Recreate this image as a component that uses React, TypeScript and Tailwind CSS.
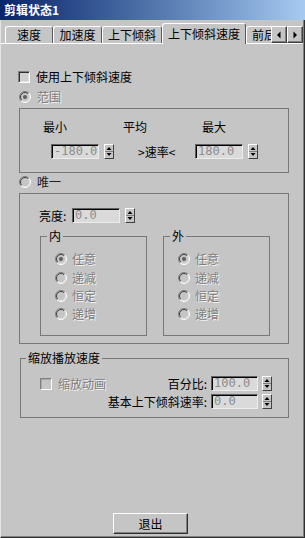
import React from "react";

const cjk = "font-['Noto_Sans_CJK_SC','Noto_Sans',sans-serif]";
const dim = "text-[#808080] [text-shadow:1px_1px_0_#f4f4f4]";

const Radio = ({ on = false }: { on?: boolean }) => (
  <svg width="12" height="12" viewBox="0 0 12 12" className="shrink-0">
    <circle cx="6" cy="6" r="5" fill="#c5c5c5" />
    <path d="M2.1 9.9A5.5 5.5 0 0 1 9.9 2.1" fill="none" stroke="#808080" />
    <path d="M9.9 2.1A5.5 5.5 0 0 1 2.1 9.9" fill="none" stroke="#ffffff" />
    <path d="M2.8 9.2A4.5 4.5 0 0 1 9.2 2.8" fill="none" stroke="#404040" />
    <path d="M9.2 2.8A4.5 4.5 0 0 1 2.8 9.2" fill="none" stroke="#dfdfdf" />
    {on && <circle cx="6" cy="6" r="2" fill="#5e5e5e" />}
  </svg>
);

const Check = ({ off = false }: { off?: boolean }) => (
  <span
    className={`block w-[12px] h-[12px] shrink-0 border border-t-[#808080] border-l-[#808080] border-r-white border-b-white ${
      off
        ? "bg-[#c5c5c5] shadow-[inset_1px_1px_0_#a8a8a8]"
        : "bg-[#d0d0d0] shadow-[inset_1px_1px_0_#303030,inset_-1px_-1px_0_#dfdfdf]"
    }`}
  />
);

const SpinBtn = ({ gap = "ml-[5px]" }: { gap?: string }) => (
  <div
    className={`${gap} w-[10px] h-[15px] shrink-0 border border-t-white border-l-white border-r-[#404040] border-b-[#404040] bg-[#c5c5c5] flex`}
  >
    <svg width="8" height="13" viewBox="0 0 8 13">
      <path d="M4 2L6.5 5H1.5Z" fill="#000" />
      <line x1="0" y1="6.5" x2="8" y2="6.5" stroke="#808080" />
      <path d="M1.5 8H6.5L4 11Z" fill="#000" />
    </svg>
  </div>
);

const Spinner = ({ v, small = false }: { v: string; small?: boolean }) => (
  <div className="flex items-center">
    <div
      className={`${small ? "w-[47px]" : "w-[48px]"} h-[15px] border border-t-[#606060] border-l-[#606060] border-b-[#ececec] border-r-[#ececec] shadow-[inset_1px_1px_0_#000] bg-[#dadada] pl-[2px] text-[12px] leading-[13px] text-[#8c8c8c] font-['DejaVu_Sans_Mono',monospace]`}
    >
      {v}
    </div>
    <SpinBtn gap={small ? "ml-[4px]" : "ml-[5px]"} />
  </div>
);

const Tab = ({ label, w, active = false }: { label: string; w: string; active?: boolean }) =>
  active ? (
    <div
      className={`${w} h-[21px] shrink-0 -mx-[0px] border-l border-t border-r border-l-white border-t-white border-r-[#5a5a5a] rounded-t-[3px] flex items-center justify-center pb-[1px]`}
    >
      {label}
    </div>
  ) : (
    <div className={`${w} h-[18px] shrink-0 border-b border-b-white flex`}>
      <div className="flex-1 border-l border-t border-r border-l-white border-t-white border-r-[#5a5a5a] rounded-t-[3px] flex items-center justify-center whitespace-nowrap overflow-hidden">
        {label}
      </div>
    </div>
  );

const ArrowBtn = ({ d }: { d: string }) => (
  <div className="w-[16px] h-[17px] border border-t-white border-l-white border-r-[#404040] border-b-[#404040] shadow-[inset_-1px_-1px_0_#808080] bg-[#c5c5c5] flex items-center justify-center">
    <svg width="6" height="8" viewBox="0 0 6 8">
      <path d={d} fill="#000" />
    </svg>
  </div>
);

const RadioItem = ({ label, on = false, gap = "gap-[5px]" }: { label: string; on?: boolean; gap?: string }) => (
  <div className={`h-[16px] flex items-center ${gap}`}>
    <Radio on={on} />
    <span className={dim}>{label}</span>
  </div>
);

const Group = ({ title, ml }: { title: string; ml: string }) => (
  <fieldset className={`${ml} w-[107px] h-[108px] border border-[#787878]`}>
    <legend className="ml-[6px] px-[2px] h-[16px] leading-[16px] text-black">{title}</legend>
    <div className="pl-[14px] pt-[7px] flex flex-col">
      <RadioItem label="任意" on />
      <div className="mt-[3px]">
        <RadioItem label="递减" />
      </div>
      <div className="mt-[2px]">
        <RadioItem label="恒定" />
      </div>
      <div className="mt-[2px]">
        <RadioItem label="递增" />
      </div>
    </div>
  </fieldset>
);

export default function App() {
  return (
    <div className={`w-[305px] h-[538px] flex flex-col bg-[#c5c5c5] text-[12px] leading-[16px] text-black ${cjk}`}>
      <div className="h-[20px] shrink-0 bg-linear-to-r from-[#0a246a] to-[#a6caf0] flex items-center pl-[4px] text-white font-bold">
        剪辑状态1
      </div>

      <div className="flex-1 flex flex-col border-l border-l-[#e4e4e4] border-r border-r-[#303030] border-b border-b-[#303030] shadow-[inset_-1px_-1px_0_#808080]">
        {/* tab strip */}
        <div className="h-[24px] shrink-0 flex items-end">
          <div className="w-[4px] h-[1px] bg-white" />
          <div className="w-[266px] h-[24px] flex items-end overflow-hidden">
            <Tab label="速度" w="w-[48px]" />
            <Tab label="加速度" w="w-[49px]" />
            <Tab label="上下倾斜" w="w-[60px]" />
            <Tab label="上下倾斜速度" w="w-[84px]" active />
            <Tab label="前后倾斜" w="w-[60px]" />
          </div>
          <div className="w-[32px] h-[18px] flex border-b border-b-white">
            <ArrowBtn d="M4.5 0.5V7.5L1 4Z" />
            <ArrowBtn d="M1.5 0.5V7.5L5 4Z" />
          </div>
        </div>

        {/* panel */}
        <div className="flex-1 flex flex-col">
          <div className="mt-[25px] ml-[17px] h-[16px] flex items-center gap-[6px]">
            <Check />
            <span>使用上下倾斜速度</span>
          </div>

          <div className="mt-[4px] ml-[18px]">
            <RadioItem label="范围" on gap="gap-[6px]" />
          </div>

          <div className="mt-[3px] ml-[18px] w-[270px] h-[65px] border border-[#787878] flex flex-col">
            <div className="mt-[10px] h-[16px] flex">
              <span className="ml-[23px] w-[24px]">最小</span>
              <span className="ml-[56px] w-[24px]">平均</span>
              <span className="ml-[55px] w-[24px]">最大</span>
            </div>
            <div className="mt-[9px] h-[15px] flex items-center">
              <div className="ml-[31px]">
                <Spinner v="-180.0" />
              </div>
              <span className="ml-[24px] w-[37px] whitespace-nowrap">&gt;速率&lt;</span>
              <div className="ml-[20px]">
                <Spinner v="180.0" />
              </div>
            </div>
          </div>

          <div className="mt-[1px] ml-[18px] h-[16px] flex items-center gap-[6px]">
            <Radio />
            <span className="text-[#202020]">唯一</span>
          </div>

          <div className="mt-[3px] ml-[18px] w-[270px] h-[151px] border border-[#787878] flex flex-col">
            <div className="mt-[14px] h-[15px] flex items-center">
              <span className="ml-[19px] w-[33px]">亮度:</span>
              <Spinner v="0.0" />
            </div>
            <div className="mt-[5px] flex">
              <Group title="内" ml="ml-[20px]" />
              <Group title="外" ml="ml-[16px]" />
            </div>
          </div>

          <fieldset className="mt-[6px] ml-[19px] w-[269px] h-[68px] border border-[#787878]">
            <legend className="ml-[5px] px-[2px] h-[16px] leading-[16px]">缩放播放速度</legend>
            <div className="pt-[10px] flex flex-col">
              <div className="h-[15px] flex items-center">
                <div className="w-[186px] flex items-center">
                  <div className="ml-[19px] flex items-center gap-[6px]">
                    <Check off />
                    <span className={dim}>缩放动画</span>
                  </div>
                  <span className="flex-1 text-right">百分比:</span>
                </div>
                <div className="ml-[4px]">
                  <Spinner v="100.0" small />
                </div>
              </div>
              <div className="mt-[3px] h-[15px] flex items-center">
                <span className="w-[186px] text-right">基本上下倾斜速率:</span>
                <div className="ml-[4px]">
                  <Spinner v="0.0" small />
                </div>
              </div>
            </div>
          </fieldset>

          <div className="flex-1" />
          <div className="mb-[3px] ml-[112px] w-[75px] h-[21px] border border-t-white border-l-white border-r-[#303030] border-b-[#303030] shadow-[inset_-1px_-1px_0_#808080] flex items-center justify-center">
            退出
          </div>
        </div>
      </div>
    </div>
  );
}
